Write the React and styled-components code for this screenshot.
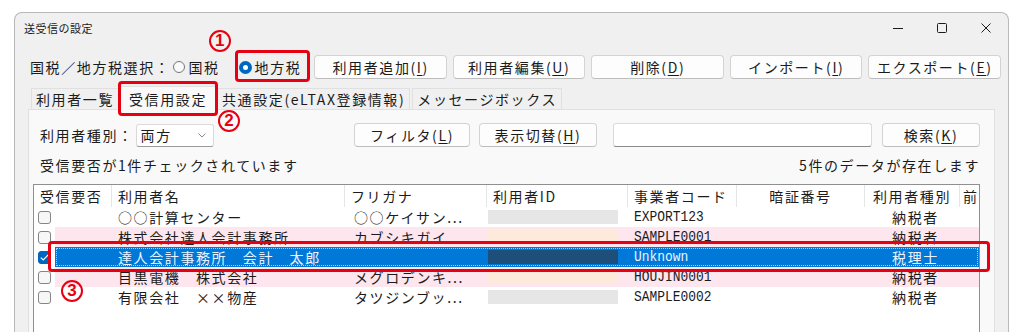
import React from 'react';
import styled, { createGlobalStyle, css } from 'styled-components';

const GlobalStyle = createGlobalStyle`
  html, body {
    margin: 0;
    padding: 0;
    background: #ffffff;
  }
  body {
    font-family: "Noto Sans CJK JP", "Noto Sans", sans-serif;
    color: #1b1b1b;
    font-size: 14px;
    letter-spacing: 1.6px;
  }
`;

const RED = '#e60012';

const Page = styled.div`
  height: 332px;
  padding: 12px 0 0 14px;
  box-sizing: border-box;
  overflow: hidden;
`;

const Window = styled.div`
  width: 995px;
  height: 330px;
  box-sizing: border-box;
  background: #f0f0f0;
  border: 1px solid #b9b9b9;
  border-bottom: none;
  border-radius: 8px 8px 0 0;
  display: flex;
  flex-direction: column;
`;

const TitleBar = styled.div`
  height: 30px;
  display: flex;
  align-items: center;
  padding-left: 9px;
`;

const Title = styled.span`
  font-size: 11px;
  letter-spacing: 0.5px;
  flex: 1;
`;

const WinControl = styled.div`
  width: 44px;
  height: 30px;
  display: flex;
  align-items: center;
  justify-content: center;
`;

const Toolbar = styled.div`
  display: flex;
  align-items: center;
  height: 24px;
  margin-top: 12px;
  padding: 0 7px 0 15px;
`;

const Label = styled.span`
  white-space: nowrap;
  line-height: 20px;
`;

const RadioItem = styled.label`
  position: relative;
  display: flex;
  align-items: center;
  height: 24px;
  gap: 3px;
  margin-left: ${({ $gap }) => $gap}px;
  white-space: nowrap;
  ${({ $marked }) =>
    $marked &&
    css`
      &::after {
        content: '';
        position: absolute;
        inset: -5px -9px -3px -4px;
        border: 3px solid ${RED};
        border-radius: 4px;
      }
    `}
`;

const RadioDot = styled.span`
  width: 12px;
  height: 12px;
  box-sizing: border-box;
  border-radius: 50%;
  border: 1px solid #767676;
  background: #fafafa;
  ${({ $checked }) =>
    $checked &&
    css`
      width: 13px;
      height: 13px;
      border: 4px solid #0067c0;
      background: #ffffff;
    `}
`;

const Badge = styled.span`
  position: absolute;
  left: ${({ $x }) => $x}px;
  top: ${({ $y }) => $y}px;
  width: 22px;
  height: 22px;
  box-sizing: border-box;
  border: 2px solid ${RED};
  border-radius: 50%;
  color: ${RED};
  background: transparent;
  font-family: "Liberation Sans", Arial, sans-serif;
  font-weight: 700;
  font-size: 17px;
  letter-spacing: 0;
  display: flex;
  align-items: center;
  justify-content: center;
  z-index: 3;
`;

const ButtonGroup = styled.div`
  flex: 1;
  display: flex;
  gap: 6px;
  margin-left: 13px;
`;

const Button = styled.button`
  flex: ${({ $w }) => ($w ? `0 0 ${$w}px` : '1')};
  height: 24px;
  box-sizing: border-box;
  background: #fdfdfd;
  border: 1px solid #d3d3d3;
  border-bottom-color: #bdbdbd;
  border-radius: 4px;
  font-family: inherit;
  font-size: 14px;
  letter-spacing: 1.6px;
  color: #1b1b1b;
  padding: 0;
  white-space: nowrap;
  u {
    text-underline-offset: 2px;
  }
`;

const TabStrip = styled.div`
  display: flex;
  align-items: flex-end;
  height: 23px;
  margin: 7px 13px 0;
  padding-left: 2px;
`;

const Tab = styled.div`
  position: relative;
  height: ${({ $active }) => ($active ? 24 : 21)}px;
  display: flex;
  align-items: center;
  padding: 0 ${({ $active }) => ($active ? 8 : 4)}px;
  margin: 0 ${({ $active }) => ($active ? 0 : 1)}px;
  box-sizing: border-box;
  background: ${({ $active }) => ($active ? '#f9f9f9' : '#f0f0f0')};
  border: 1px solid #e0e0e0;
  border-bottom: none;
  white-space: nowrap;
  z-index: ${({ $active }) => ($active ? 2 : 1)};
  margin-bottom: ${({ $active }) => ($active ? -1 : 0)}px;
  ${({ $marked }) =>
    $marked &&
    css`
      &::after {
        content: '';
        position: absolute;
        inset: -6px -3px -6px -3px;
        border: 3px solid ${RED};
        border-radius: 4px;
      }
    `}
`;

const Pane = styled.div`
  flex: 1;
  margin: 0 13px;
  background: #f9f9f9;
  border: 1px solid #e0e0e0;
  border-bottom: none;
  padding: 13px 14px 0 4px;
  display: flex;
  flex-direction: column;
`;

const FilterRow = styled.div`
  display: flex;
  align-items: center;
  height: 24px;
  padding-left: 7px;
`;

const Select = styled.div`
  position: relative;
  width: 78px;
  height: 23px;
  box-sizing: border-box;
  margin-left: 2px;
  background: #ffffff;
  border: 1px solid #dadada;
  border-bottom-color: #9a9a9a;
  border-radius: 3px;
  display: flex;
  align-items: center;
  justify-content: space-between;
  padding: 0 7px 0 4px;
`;

const TextInput = styled.div`
  width: 259px;
  height: 24px;
  box-sizing: border-box;
  margin: 0 10px 0 16px;
  background: #ffffff;
  border: 1px solid #dadada;
  border-bottom-color: #8a8a8a;
  border-radius: 3px;
`;

const InfoRow = styled.div`
  display: flex;
  justify-content: space-between;
  align-items: center;
  height: 20px;
  margin-top: 8px;
  padding-left: 7px;
`;

const ListBox = styled.div`
  margin-top: 9px;
  flex: 1;
  background: #ffffff;
  border: 1px solid #8f8f8f;
  border-bottom: none;
`;

const HeaderRow = styled.div`
  display: grid;
  grid-template-columns: 78px 233px 142px 141px 109px 128px 95px 1fr;
  height: 22px;
`;

const HeaderCell = styled.div`
  display: flex;
  align-items: center;
  justify-content: ${({ $center }) => ($center ? 'center' : 'flex-start')};
  padding: 0 ${({ $center }) => ($center ? 0 : 6)}px;
  border-right: 1px solid #e5e5e5;
  white-space: nowrap;
  overflow: hidden;
  &:last-child {
    border-right: none;
    padding: 0 0 0 3px;
    letter-spacing: 0;
  }
`;

const Row = styled.div`
  display: flex;
  height: 20px;
`;

const CheckCell = styled.div`
  width: 21px;
  display: flex;
  align-items: center;
  padding-left: 4px;
  box-sizing: border-box;
`;

const CheckBox = styled.span`
  width: 13px;
  height: 13px;
  box-sizing: border-box;
  border-radius: 3px;
  border: 1px solid ${({ $checked }) => ($checked ? '#0067c0' : '#858585')};
  background: ${({ $checked }) => ($checked ? '#0067c0' : '#f7f7f7')};
  display: flex;
  align-items: center;
  justify-content: center;
`;

const rowBg = {
  plain: '#ffffff',
  pink: '#fde6ee',
  selected: '#0078d7',
};

const RowBody = styled.div`
  position: relative;
  flex: 1;
  display: grid;
  grid-template-columns: 57px 233px 142px 141px 109px 128px 95px 1fr;
  background: ${({ $kind }) => rowBg[$kind]};
  color: ${({ $kind }) => ($kind === 'selected' ? '#eaf4ff' : '#1b1b1b')};
  ${({ $kind }) =>
    $kind === 'selected' &&
    css`
      outline: 1px dotted #a8d2f5;
      outline-offset: -2px;
    `}
  ${({ $marked }) =>
    $marked &&
    css`
      &::after {
        content: '';
        position: absolute;
        inset: -6px -11px -5px -7px;
        border: 3px solid ${RED};
        border-radius: 4px;
        z-index: 2;
      }
    `}
`;

const Cell = styled.div`
  display: flex;
  align-items: center;
  justify-content: ${({ $center }) => ($center ? 'center' : 'flex-start')};
  padding-left: ${({ $pad }) => $pad ?? 6}px;
  white-space: nowrap;
  overflow: hidden;
`;

const Code = styled.span`
  display: inline-block;
  font-family: "Liberation Mono", "DejaVu Sans Mono", monospace;
  font-size: 15px;
  letter-spacing: 0;
  transform: scaleX(0.86);
  transform-origin: left center;
`;

const Redacted = styled.span`
  width: 130px;
  height: 14px;
  background: ${({ $tone }) => $tone};
`;

const idTone = {
  plain: '#e6e6e6',
  pink: '#fdeadb',
  selected: '#1e4f7b',
};

const users = [
  { name: '○○計算センター', kana: '○○ケイサン...', code: 'EXPORT123', type: '納税者', kind: 'plain' },
  { name: '株式会社達人会計事務所', kana: 'カブシキガイ...', code: 'SAMPLE0001', type: '納税者', kind: 'pink' },
  { name: '達人会計事務所　会計　太郎', kana: '', code: 'Unknown', type: '税理士', kind: 'selected', checked: true },
  { name: '目黒電機　株式会社', kana: 'メグロデンキ...', code: 'HOUJIN0001', type: '納税者', kind: 'pink' },
  { name: '有限会社　××物産', kana: 'タツジンブッ...', code: 'SAMPLE0002', type: '納税者', kind: 'plain' },
];

const Minimize = () => (
  <svg width="10" height="10" viewBox="0 0 10 10">
    <line x1="0" y1="5.5" x2="10" y2="5.5" stroke="#1b1b1b" strokeWidth="1" />
  </svg>
);

const Maximize = () => (
  <svg width="10" height="10" viewBox="0 0 10 10">
    <rect x="0.5" y="0.5" width="9" height="9" rx="1" fill="none" stroke="#1b1b1b" strokeWidth="1" />
  </svg>
);

const Close = () => (
  <svg width="10" height="10" viewBox="0 0 10 10">
    <path d="M0.5 0.5 L9.5 9.5 M9.5 0.5 L0.5 9.5" stroke="#1b1b1b" strokeWidth="1" />
  </svg>
);

const Chevron = () => (
  <svg width="8" height="5" viewBox="0 0 8 5">
    <path d="M0.5 0.5 L4 4 L7.5 0.5" fill="none" stroke="#8a8a8a" strokeWidth="1" />
  </svg>
);

const Check = () => (
  <svg width="9" height="7" viewBox="0 0 9 7">
    <path d="M0.8 3.6 L3.2 6 L8.2 0.8" fill="none" stroke="#ffffff" strokeWidth="1.2" />
  </svg>
);

const App = () => {
  return (
    <Page>
      <GlobalStyle />
      <Window>
        <TitleBar>
          <Title>送受信の設定</Title>
          <WinControl><Minimize /></WinControl>
          <WinControl><Maximize /></WinControl>
          <WinControl><Close /></WinControl>
        </TitleBar>

        <Toolbar>
          <Label>国税／地方税選択：</Label>
          <RadioItem $gap={3}>
            <RadioDot />
            国税
          </RadioItem>
          <RadioItem $gap={19} $marked>
            <Badge $x={-30} $y={-25}>1</Badge>
            <RadioDot $checked />
            地方税
          </RadioItem>
          <ButtonGroup>
            <Button>利用者追加(<u>I</u>)</Button>
            <Button>利用者編集(<u>U</u>)</Button>
            <Button>削除(<u>D</u>)</Button>
            <Button>インポート(<u>I</u>)</Button>
            <Button>エクスポート(<u>E</u>)</Button>
          </ButtonGroup>
        </Toolbar>

        <TabStrip>
          <Tab>利用者一覧</Tab>
          <Tab $active $marked>
            受信用設定
            <Badge $x={97} $y={23}>2</Badge>
          </Tab>
          <Tab>共通設定(eLTAX登録情報)</Tab>
          <Tab>メッセージボックス</Tab>
        </TabStrip>

        <Pane>
          <FilterRow>
            <Label>利用者種別：</Label>
            <Select>
              両方
              <Chevron />
            </Select>
            <Button $w={116} style={{ marginLeft: 'auto' }}>フィルタ(<u>L</u>)</Button>
            <Button $w={118} style={{ marginLeft: 9 }}>表示切替(<u>H</u>)</Button>
            <TextInput />
            <Button $w={98}>検索(<u>K</u>)</Button>
          </FilterRow>

          <InfoRow>
            <Label>受信要否が1件チェックされています</Label>
            <Label>5件のデータが存在します</Label>
          </InfoRow>

          <ListBox>
            <HeaderRow>
              <HeaderCell>受信要否</HeaderCell>
              <HeaderCell>利用者名</HeaderCell>
              <HeaderCell>フリガナ</HeaderCell>
              <HeaderCell>利用者ID</HeaderCell>
              <HeaderCell>事業者コード</HeaderCell>
              <HeaderCell $center>暗証番号</HeaderCell>
              <HeaderCell $center>利用者種別</HeaderCell>
              <HeaderCell>前</HeaderCell>
            </HeaderRow>
            {users.map((u) => (
              <Row key={u.code}>
                <CheckCell>
                  <CheckBox $checked={u.checked}>{u.checked && <Check />}</CheckBox>
                </CheckCell>
                <RowBody $kind={u.kind} $marked={u.kind === 'selected'}>
                  {u.kind === 'selected' && <Badge $x={6} $y={33}>3</Badge>}
                  <Cell />
                  <Cell>{u.name}</Cell>
                  <Cell $pad={9}>{u.kana}</Cell>
                  <Cell $pad={1}>
                    <Redacted $tone={idTone[u.kind]} />
                  </Cell>
                  <Cell $pad={6}>
                    <Code>{u.code}</Code>
                  </Cell>
                  <Cell />
                  <Cell $center>{u.type}</Cell>
                  <Cell />
                </RowBody>
              </Row>
            ))}
          </ListBox>
        </Pane>
      </Window>
    </Page>
  );
};

export default App;
